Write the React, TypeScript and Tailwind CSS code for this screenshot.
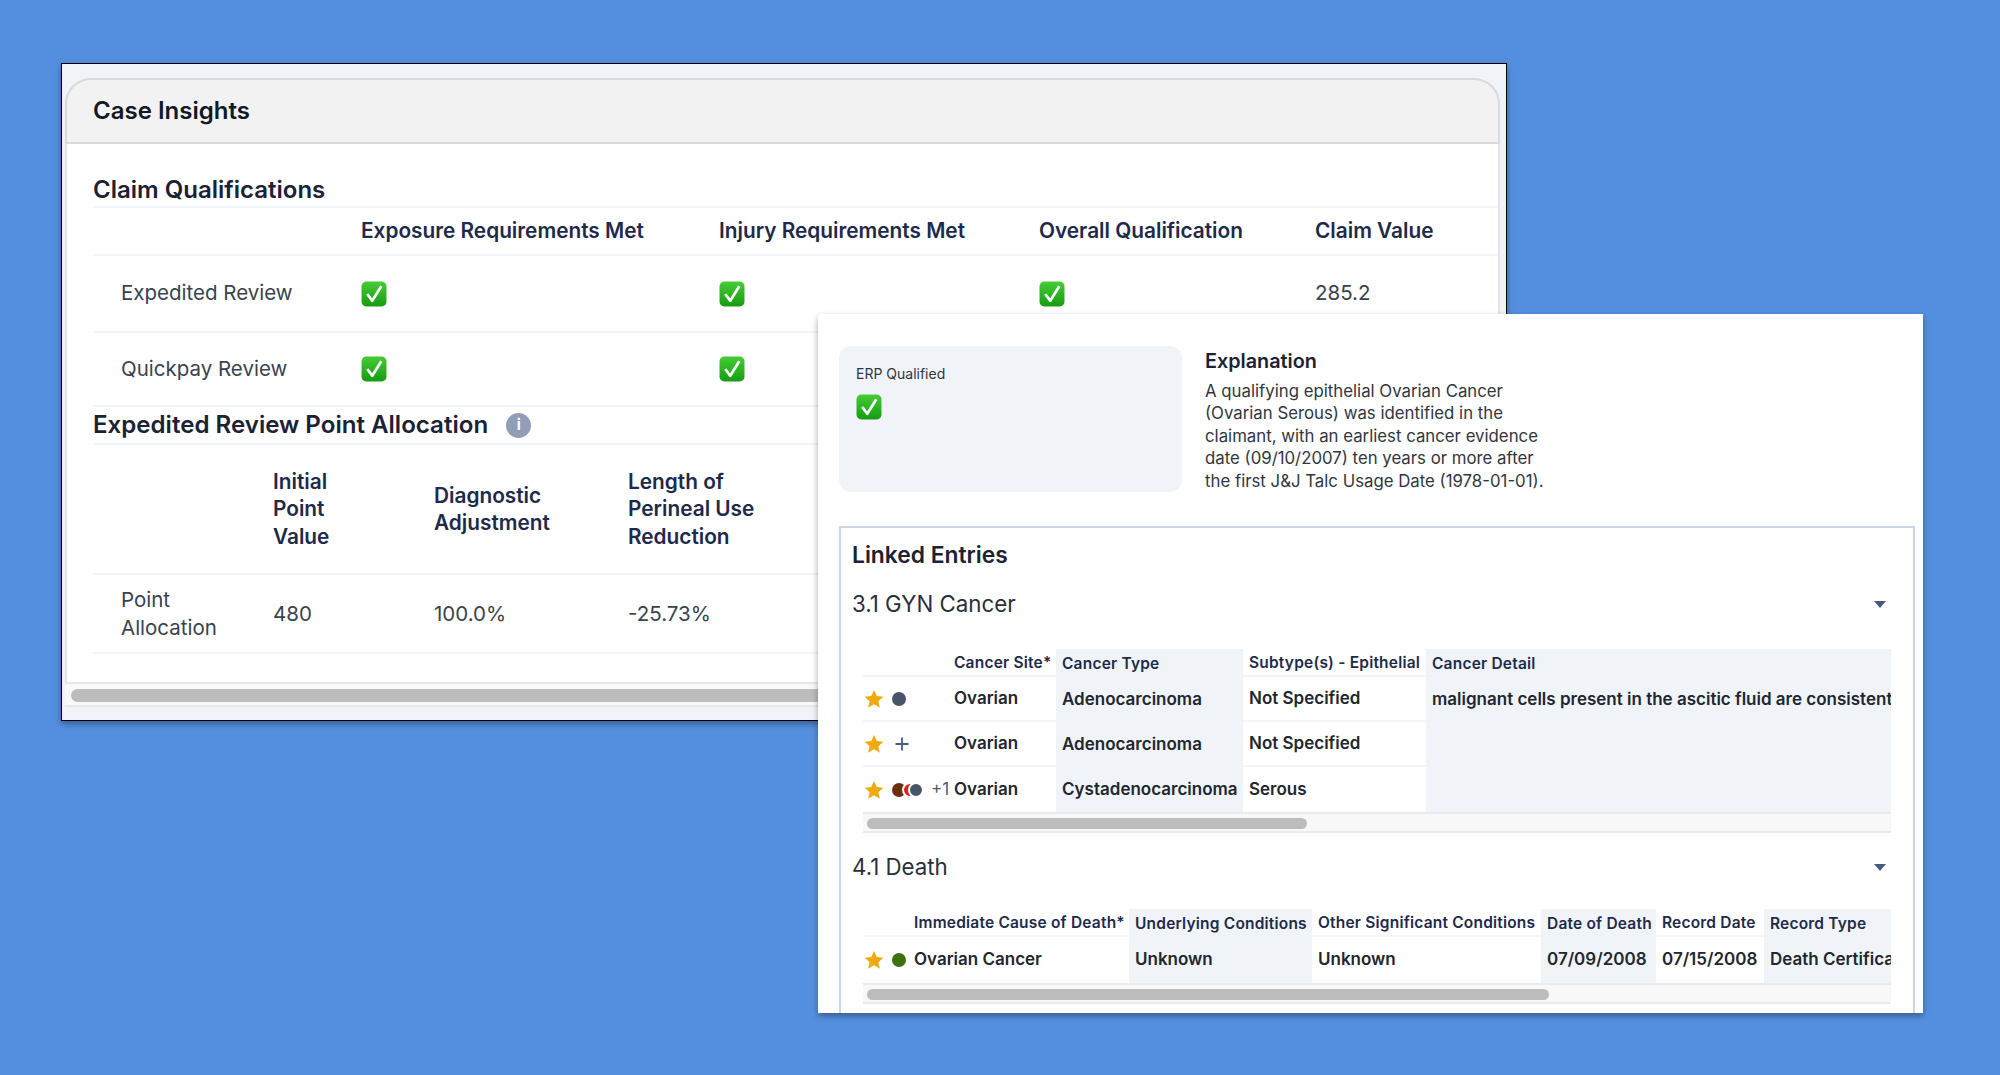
import type { ReactNode } from 'react'

const claimCols = 'grid grid-cols-[268px_358px_320px_276px_155px] items-center'
const pointCols = 'grid grid-cols-[180px_161px_194px_300px] items-center'
const gynCols = 'grid grid-cols-[85px_108px_187px_183px_465px] grid-rows-[28px_45px_45px_45px]'
const deathCols = 'grid grid-cols-[45px_221px_183px_229px_115px_108px_127px] grid-rows-[28px_46px]'

function CheckBox() {
  return (
    <svg viewBox="0 0 25 25" className="h-[26px] w-[26px]">
      <defs>
        <linearGradient id="chk" x1="0" y1="0" x2="0" y2="1">
          <stop offset="0" stopColor="#45cc35" />
          <stop offset="1" stopColor="#179c12" />
        </linearGradient>
      </defs>
      <rect x="0.5" y="0.5" width="24" height="24" rx="4.5" fill="url(#chk)" />
      <path d="M6 12.5 L10.8 19 L19.5 5" fill="none" stroke="#fff" strokeWidth="2.6" strokeLinejoin="round" />
    </svg>
  )
}

function Star() {
  return (
    <svg viewBox="0 0 24 24" className="h-[20px] w-[20px] shrink-0">
      <path d="M12 1.2 15.3 8.4 23.2 9.3 17.3 14.6 19 22.5 12 18.4 5 22.5 6.7 14.6 .8 9.3 8.7 8.4Z" fill="#efaa12" />
    </svg>
  )
}

function Dot({ color }: { color: string }) {
  return <span className="h-[14px] w-[14px] shrink-0 rounded-full" style={{ backgroundColor: color }} />
}

function Plus() {
  return (
    <svg viewBox="0 0 14 14" className="ml-[3px] h-[14px] w-[14px]">
      <path d="M7 0.5V13.5M0.5 7H13.5" stroke="#4b5a80" strokeWidth="1.8" />
    </svg>
  )
}

function Caret() {
  return (
    <svg viewBox="0 0 12 7" className="h-[7px] w-[12px]">
      <path d="M0 0H12L6 7Z" fill="#4b5a80" />
    </svg>
  )
}

function Scrollbar({ width }: { width: string }) {
  return (
    <div className="h-[21px] border-y-2 border-[#ebebeb] bg-[#f8f8f8] pl-[4px] pt-[4px]">
      <div className={`h-[11px] rounded-full bg-[#bcbcbc] ${width}`} />
    </div>
  )
}

function HeadCell({ shaded, children }: { shaded?: boolean; children?: ReactNode }) {
  return (
    <div
      className={`flex items-center overflow-hidden whitespace-nowrap pl-[6px] pt-[2px] text-[15.5px] font-semibold tracking-[0.2px] text-[#1e2a4a] ${
        shaded ? 'bg-[#f0f4f9]' : 'border-b-2 border-[#f2f5fa]'
      }`}
    >
      {children}
    </div>
  )
}

function Cell({ shaded, last, children }: { shaded?: boolean; last?: boolean; children?: ReactNode }) {
  return (
    <div
      className={`flex items-center overflow-hidden whitespace-nowrap pl-[6px] text-[17px] font-semibold text-[#22262e] ${
        shaded ? 'bg-[#f0f4f9]' : last ? '' : 'border-b-2 border-[#f2f5fa]'
      }`}
    >
      {children}
    </div>
  )
}

function IconCell({ last, children }: { last?: boolean; children: ReactNode }) {
  return (
    <div className={`flex items-center gap-[8px] pl-[1px] ${last ? '' : 'border-b-2 border-[#f2f5fa]'}`}>
      <Star />
      {children}
    </div>
  )
}

const gynRows = [
  { icon: <Dot color="#475569" />, type: 'Adenocarcinoma', sub: 'Not Specified' },
  { icon: <Plus />, type: 'Adenocarcinoma', sub: 'Not Specified' },
  {
    icon: (
      <span className="flex items-center">
        <Dot color="#6b2f10" />
        <span className="-ml-[4px] h-[16px] w-[16px] rounded-full border-2 border-white bg-[#dc1f1f]" />
        <span className="-ml-[10px] h-[16px] w-[16px] rounded-full border-2 border-white bg-[#475569]" />
        <span className="ml-[7px] text-[17px] text-[#4b5a80]">+1</span>
      </span>
    ),
    type: 'Cystadenocarcinoma',
    sub: 'Serous',
  },
]

function CaseInsights() {
  return (
    <div className="absolute left-[61px] top-[63px] flex h-[658px] w-[1446px] flex-col border-[1.5px] border-black bg-[#f0f4f9] pl-[3px] pr-[6px] pt-[14px] shadow-[0_3px_6px_rgba(0,0,0,0.35)] [font-family:Inter,sans-serif]">
      <div className="flex h-[66px] shrink-0 items-center rounded-t-[26px] border-x-2 border-y-2 border-[#d9d9d9] bg-[#f2f2f2] pl-[26px] text-[24px] font-semibold text-[#111827]">
        Case Insights
      </div>
      <div className="flex h-[538px] flex-col border-x-2 border-[#e5e5e5] bg-white pl-[26px]">
        <h2 className="flex h-[64px] shrink-0 items-end border-b-2 border-[#f2f5fa] text-[24px] font-semibold leading-[33px] text-[#1a2233]">
          Claim Qualifications
        </h2>
        <div className={`${claimCols} h-[48px] border-b-2 border-[#f2f5fa] text-[20.8px] font-semibold text-[#1e2a4a]`}>
          <span />
          <span>Exposure Requirements Met</span>
          <span>Injury Requirements Met</span>
          <span>Overall Qualification</span>
          <span>Claim Value</span>
        </div>
        <div className={`${claimCols} h-[77px] border-b-2 border-[#f2f5fa] text-[20.5px] text-[#3a4250]`}>
          <span className="pl-[28px]">Expedited Review</span>
          <CheckBox />
          <CheckBox />
          <CheckBox />
          <span>285.2</span>
        </div>
        <div className={`${claimCols} h-[74px] border-b-2 border-[#f2f5fa] text-[20.5px] text-[#3a4250]`}>
          <span className="pl-[28px]">Quickpay Review</span>
          <CheckBox />
          <CheckBox />
        </div>
        <h2 className="flex h-[38px] shrink-0 items-center gap-[18px] border-b-2 border-[#f2f5fa] text-[24.1px] font-semibold text-[#1a2233]">
          Expedited Review Point Allocation
          <span className="flex h-[25px] w-[25px] items-center justify-center rounded-full bg-[#939db8] text-[15px] font-bold text-white">
            i
          </span>
        </h2>
        <div className={`${pointCols} h-[130px] border-b-2 border-[#f2f5fa] text-[20.8px] font-semibold leading-[27.3px] text-[#1e2a4a]`}>
          <span />
          <span>
            Initial
            <br />
            Point
            <br />
            Value
          </span>
          <span>
            Diagnostic
            <br />
            Adjustment
          </span>
          <span>
            Length of
            <br />
            Perineal Use
            <br />
            Reduction
          </span>
        </div>
        <div className={`${pointCols} h-[79px] border-b-2 border-[#f2f5fa] text-[20.5px] leading-[27.3px] text-[#3a4250]`}>
          <span className="pl-[28px]">
            Point
            <br />
            Allocation
          </span>
          <span>480</span>
          <span>100.0%</span>
          <span>-25.73%</span>
        </div>
      </div>
      <div className="h-[25px] border-y-2 border-[#e8e8e8] bg-[#f8f8f8] pl-[6px] pt-[5px]">
        <div className="h-[13px] rounded-full bg-[#bcbcbc]" />
      </div>
    </div>
  )
}

function DetailPanel() {
  return (
    <div className="absolute left-[818px] top-[314px] flex h-[699px] w-[1105px] flex-col overflow-hidden rounded-tl-[4px] bg-white pl-[21px] pr-[8px] pt-[32px] shadow-[0_3px_6px_rgba(0,0,0,0.35)] [font-family:Inter,sans-serif]">
      <div className="flex h-[146px] shrink-0 gap-[23px]">
        <div className="w-[343px] rounded-[12px] bg-[#f0f4f9] pl-[17px] pt-[19px]">
          <div className="text-[14px] leading-[17px] text-[#30363f]">ERP Qualified</div>
          <div className="mt-[12px]">
            <CheckBox />
          </div>
        </div>
        <div className="w-[400px]">
          <div className="text-[19.8px] font-semibold leading-[30px] text-[#1a2233]">Explanation</div>
          <p className="mt-[4px] text-[16.8px] leading-[22.4px] text-[#30363f]">
            A qualifying epithelial Ovarian Cancer
            <br />
            (Ovarian Serous) was identified in the
            <br />
            claimant, with an earliest cancer evidence
            <br />
            date (09/10/2007) ten years or more after
            <br />
            the first J&amp;J Talc Usage Date (1978-01-01).
          </p>
        </div>
      </div>
      <div className="mt-[34px] flex flex-1 flex-col border-x-2 border-t-2 border-[#ccd5e6] pl-[11px] pr-[22px]">
        <h3 className="mt-[12px] text-[22.8px] font-semibold leading-[30px] text-[#1a2233]">Linked Entries</h3>
        <div className="mt-[19px] flex h-[30px] items-center justify-between pr-[5px] text-[22.3px] leading-[30px] text-[#2a303a]">
          <span>3.1 GYN Cancer</span>
          <Caret />
        </div>
        <div className="ml-[11px] mt-[30px]">
          <div className={gynCols}>
            <HeadCell />
            <HeadCell>Cancer Site*</HeadCell>
            <HeadCell shaded>Cancer Type</HeadCell>
            <HeadCell>Subtype(s) - Epithelial</HeadCell>
            <HeadCell shaded>Cancer Detail</HeadCell>
            {gynRows.map((row, i) => (
              <div key={i} className="contents">
                <IconCell last={i === 2}>{row.icon}</IconCell>
                <Cell last={i === 2}>Ovarian</Cell>
                <Cell shaded>{row.type}</Cell>
                <Cell last={i === 2}>{row.sub}</Cell>
                {i === 0 ? (
                  <Cell shaded>malignant cells present in the ascitic fluid are consistent</Cell>
                ) : (
                  <Cell shaded />
                )}
              </div>
            ))}
          </div>
          <Scrollbar width="w-[440px]" />
        </div>
        <div className="mt-[19px] flex h-[30px] items-center justify-between pr-[5px] text-[22.3px] leading-[30px] text-[#2a303a]">
          <span>4.1 Death</span>
          <Caret />
        </div>
        <div className="ml-[11px] mt-[27px]">
          <div className={deathCols}>
            <HeadCell />
            <HeadCell>Immediate Cause of Death*</HeadCell>
            <HeadCell shaded>Underlying Conditions</HeadCell>
            <HeadCell>Other Significant Conditions</HeadCell>
            <HeadCell shaded>Date of Death</HeadCell>
            <HeadCell>Record Date</HeadCell>
            <HeadCell shaded>Record Type</HeadCell>
            <IconCell last>
              <Dot color="#3f7012" />
            </IconCell>
            <Cell last>Ovarian Cancer</Cell>
            <Cell shaded>Unknown</Cell>
            <Cell last>Unknown</Cell>
            <Cell shaded>07/09/2008</Cell>
            <Cell last>07/15/2008</Cell>
            <Cell shaded>Death Certificate</Cell>
          </div>
          <Scrollbar width="w-[682px]" />
        </div>
      </div>
    </div>
  )
}

export default function App() {
  return (
    <div className="relative h-[1075px] w-[2000px] overflow-hidden bg-[#548fdf]">
      <CaseInsights />
      <DetailPanel />
    </div>
  )
}
